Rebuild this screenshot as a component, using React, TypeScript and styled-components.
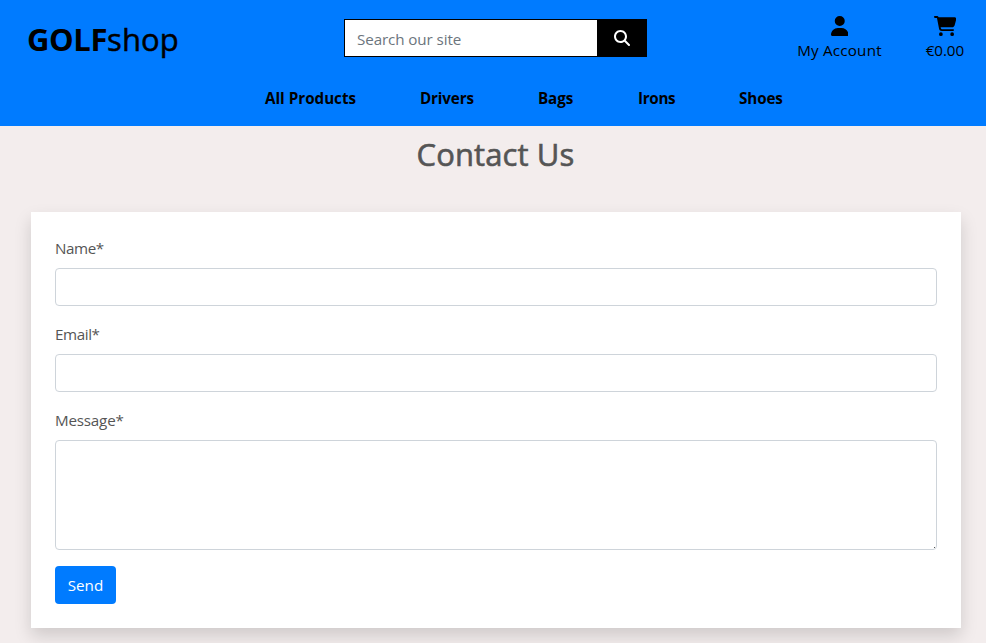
import React from "react";
import styled, { createGlobalStyle } from "styled-components";
import { FaUser, FaCartShopping, FaMagnifyingGlass } from "react-icons/fa6";

const GlobalStyle = createGlobalStyle`
  *, *::before, *::after { box-sizing: border-box; }
  body {
    margin: 0;
    background: #f3eded;
    color: #555;
    font-family: "Segoe UI", "Open Sans", "Noto Sans", sans-serif;
    font-size: 15.2px;
    line-height: 24px;
    overflow: hidden;
  }
  input, textarea, button { font: inherit; }
`;

const Page = styled.div`
  height: 643px;
  overflow: hidden;
`;

const Header = styled.header`
  height: 126px;
  background: #007bff;
  color: #000;
`;

const TopBar = styled.div`
  display: grid;
  grid-template-columns: 317px 303px 1fr;
  height: 76px;
  padding: 0 22px 0 27px;
`;

const Logo = styled.a`
  padding-top: 19px;
  font-size: 31px;
  line-height: 40px;
  font-weight: 400;
  letter-spacing: 0.05px;
  white-space: nowrap;
  -webkit-text-stroke: 0.5px currentColor;
`;

const LogoStrong = styled.strong`
  font-weight: 700;
  letter-spacing: -0.4px;
  -webkit-text-stroke: 0;
`;

const SearchForm = styled.form`
  display: flex;
  height: 38px;
  margin: 19px 0 0;
`;

const SearchInput = styled.input`
  width: 253px;
  padding: 1px 12px 0;
  border: 1px solid #000;
  border-right: 0;
  border-radius: 0;
  outline: 0;
  background: #fff;
  letter-spacing: -0.1px;
  &::placeholder { color: #6c757d; opacity: 1; }
`;

const SearchButton = styled.button`
  display: flex;
  flex: 1;
  align-items: center;
  justify-content: center;
  padding: 0 1px 0 0;
  border: 0;
  background: #000;
  color: #fff;
  font-size: 16px;
`;

const Actions = styled.div`
  display: flex;
  justify-content: flex-end;
  gap: 44px;
  padding-top: 16px;
`;

const Action = styled.a<{ $spacing: number; $iconWidth: number }>`
  display: flex;
  flex-direction: column;
  align-items: center;
  height: 46px;
  letter-spacing: ${(p) => p.$spacing}px;
  white-space: nowrap;
  svg {
    flex: none;
    width: ${(p) => p.$iconWidth}px;
    height: 20px;
    margin-bottom: 2px;
  }
`;

const Nav = styled.nav`
  display: flex;
  gap: 64px;
  padding: 10px 0 0 265px;
`;

const NavLink = styled.a<{ $width: number; $spacing: number }>`
  width: ${(p) => p.$width}px;
  font-weight: 700;
  letter-spacing: ${(p) => p.$spacing}px;
  white-space: nowrap;
`;

const Title = styled.h2`
  margin: 9px 0 0 5px;
  text-align: center;
  font-size: 31px;
  line-height: 38px;
  font-weight: 400;
  letter-spacing: 0.1px;
  -webkit-text-stroke: 0.6px currentColor;
`;

const Card = styled.form`
  height: 416px;
  margin: 39px 25px 0 31px;
  padding: 24px;
  background: #fff;
  box-shadow: 0 8px 16px rgba(0, 0, 0, 0.15);
`;

const Field = styled.div`
  margin-bottom: 16px;
`;

const Label = styled.label<{ $spacing: number }>`
  display: block;
  margin-bottom: 8px;
  letter-spacing: ${(p) => p.$spacing}px;
`;

const Input = styled.input`
  display: block;
  width: 100%;
  height: 38px;
  padding: 6px 12px;
  border: 1px solid #ced4da;
  border-radius: 4px;
  background: #fff;
`;

const TextArea = styled.textarea`
  display: block;
  width: 100%;
  height: 110px;
  padding: 6px 12px;
  border: 1px solid #ced4da;
  border-radius: 4px;
  background: #fff linear-gradient(#555, #555) right 1px bottom 1px / 1px 1px no-repeat;
  resize: none;
`;

const SendButton = styled.button`
  display: block;
  width: 61px;
  height: 38px;
  padding: 0;
  border: 0;
  border-radius: 4px;
  background: #007bff;
  color: #fff;
`;

const links = [
  { label: "All Products", width: 91, spacing: 0 },
  { label: "Drivers", width: 54, spacing: -0.15 },
  { label: "Bags", width: 36, spacing: -0.1 },
  { label: "Irons", width: 37, spacing: -0.3 },
  { label: "Shoes", width: 46, spacing: -0.1 },
];

export default function App() {
  return (
    <Page>
      <GlobalStyle />
      <Header>
        <TopBar>
          <Logo><LogoStrong>GOLF</LogoStrong>shop</Logo>
          <SearchForm>
            <SearchInput placeholder="Search our site" />
            <SearchButton type="button" aria-label="Search"><FaMagnifyingGlass /></SearchButton>
          </SearchForm>
          <Actions>
            <Action $spacing={0.2} $iconWidth={17.5}><FaUser />My Account</Action>
            <Action $spacing={-0.1} $iconWidth={22.5}><FaCartShopping />€0.00</Action>
          </Actions>
        </TopBar>
        <Nav>
          {links.map((l) => (
            <NavLink key={l.label} $width={l.width} $spacing={l.spacing}>{l.label}</NavLink>
          ))}
        </Nav>
      </Header>
      <main>
        <Title>Contact Us</Title>
        <Card>
          <Field>
            <Label $spacing={-0.4} htmlFor="name">Name*</Label>
            <Input id="name" />
          </Field>
          <Field>
            <Label $spacing={-0.4} htmlFor="email">Email*</Label>
            <Input id="email" />
          </Field>
          <Field>
            <Label $spacing={-0.2} htmlFor="message">Message*</Label>
            <TextArea id="message" />
          </Field>
          <SendButton type="button">Send</SendButton>
        </Card>
      </main>
    </Page>
  );
}
